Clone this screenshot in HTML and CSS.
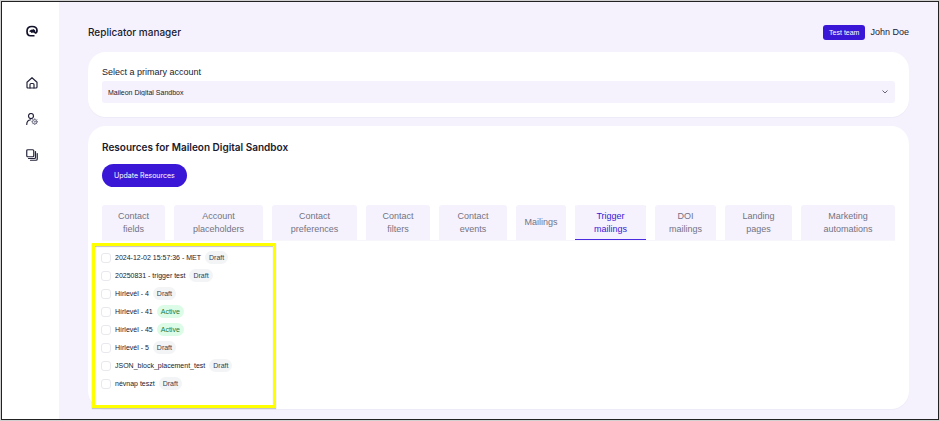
FILE: index.html
```html
<!DOCTYPE html>
<html lang="en">
  <head>
    <meta charset="UTF-8" />
    <meta name="viewport" content="width=device-width, initial-scale=1.0" />
    <title>Replicator manager</title>
    <link rel="stylesheet" href="styles.css" />
  </head>

  <body>
    <div class="app">
      <nav class="sidebar">
        <a href="#" class="logo" aria-label="Maileon">
          <svg viewBox="0 0 24 24" fill="none">
            <path
              d="M17 21.500H9C4.500 21.500 2 18 2 12.500C2 6 5.500 3 12 3C18.500 3 22 5.500 22 11C22 15 20.500 16 17.500 16"
              stroke="#12122b"
              stroke-width="3.4"
            />
            <path d="M6 12.500L10 9.500L14 9L15 8L18.500 11V16.500L14 15L11 16L9.500 14Z" fill="#12122b" />
          </svg>
        </a>
        <a href="#" aria-label="Home">
          <svg viewBox="0 0 24 24" class="line-icon">
            <path d="M2 10.500L12 1.500L22 10.500V20C22 21.500 21.500 22 20 22H4C2.500 22 2 21.500 2 20Z" />
            <path d="M8 22V15C8 13.500 8.500 13 10 13H14C15.500 13 16 13.500 16 15V22" />
          </svg>
        </a>
        <a href="#" aria-label="User settings">
          <svg viewBox="0 0 24 24" class="line-icon">
            <circle cx="10" cy="6" r="5" />
            <path d="M1.500 23C1.500 17.500 4.500 14 9.500 13.500" />
            <g class="gear">
              <circle cx="17.500" cy="17.500" r="4.500" />
              <circle cx="17.500" cy="17.500" r="1" />
              <path d="M17.500 11.500V13M17.500 22V23.500M11.500 17.500H13M22 17.500H23.500M13.300 13.300L14.300 14.300M20.700 20.700L21.700 21.700M21.700 13.300L20.700 14.300M14.300 20.700L13.300 21.700" />
            </g>
          </svg>
        </a>
        <a href="#" aria-label="Resources">
          <svg viewBox="0 0 24 24" class="line-icon">
            <rect x="1.500" y="1.500" width="14" height="14" rx="2" />
            <path d="M19 5V17C19 18.500 18.500 19 17 19H5" />
            <path d="M22.500 9V20C22.500 22 22 22.500 20 22.500H9" />
          </svg>
        </a>
      </nav>

      <main class="content">
        <header class="topbar">
          <h1>Replicator manager</h1>
          <div class="user">
            <button type="button" class="team">Test team</button>
            <span>John Doe</span>
          </div>
        </header>

        <section class="card account">
          <label for="account">Select a primary account</label>
          <div class="select">
            <select id="account">
              <option>Maileon Digital Sandbox</option>
            </select>
            <svg viewBox="0 0 6 4" class="chevron">
              <path d="M0.500 0.500L3 3L5.500 0.500" />
            </svg>
          </div>
        </section>

        <section class="card resources">
          <h2>Resources for Maileon Digital Sandbox</h2>
          <button type="button" class="update">Update Resources</button>

          <div class="tabs" role="tablist">
            <button type="button" role="tab">Contact<br />fields</button>
            <button type="button" role="tab">Account<br />placeholders</button>
            <button type="button" role="tab">Contact<br />preferences</button>
            <button type="button" role="tab">Contact<br />filters</button>
            <button type="button" role="tab">Contact<br />events</button>
            <button type="button" role="tab">Mailings</button>
            <button type="button" role="tab" class="active" aria-selected="true">Trigger<br />mailings</button>
            <button type="button" role="tab">DOI<br />mailings</button>
            <button type="button" role="tab">Landing<br />pages</button>
            <button type="button" role="tab">Marketing<br />automations</button>
          </div>

          <ul class="list">
            <li>
              <input type="checkbox" id="r1" />
              <label for="r1">2024-12-02 15:57:36 - MET</label>
              <span class="badge">Draft</span>
            </li>
            <li>
              <input type="checkbox" id="r2" />
              <label for="r2">20250831 - trigger test</label>
              <span class="badge">Draft</span>
            </li>
            <li>
              <input type="checkbox" id="r3" />
              <label for="r3">Hírlevél - 4</label>
              <span class="badge">Draft</span>
            </li>
            <li>
              <input type="checkbox" id="r4" />
              <label for="r4">Hírlevél - 41</label>
              <span class="badge green">Active</span>
            </li>
            <li>
              <input type="checkbox" id="r5" />
              <label for="r5">Hírlevél - 45</label>
              <span class="badge green">Active</span>
            </li>
            <li>
              <input type="checkbox" id="r6" />
              <label for="r6">Hírlevél - 5</label>
              <span class="badge">Draft</span>
            </li>
            <li>
              <input type="checkbox" id="r7" />
              <label for="r7">JSON_block_placement_test</label>
              <span class="badge">Draft</span>
            </li>
            <li>
              <input type="checkbox" id="r8" />
              <label for="r8">névnap teszt</label>
              <span class="badge">Draft</span>
            </li>
          </ul>
        </section>
      </main>
    </div>
  </body>
</html>
```

FILE: styles.css
```css
* {
  margin: 0;
  padding: 0;
  box-sizing: border-box;
}

body {
  min-height: 100vh;
  display: flex;
  padding: 1px;
  background-color: #d0d0d0;
  color: #1a1a2e;
  font-family: "Liberation Sans", Arial, sans-serif;
  font-size: 7px;
}

button,
select {
  font-family: inherit;
  border: none;
  cursor: pointer;
}

.app {
  flex: 1;
  display: flex;
  border: 1px solid #222;
  background-color: #f5f2fd;
}

/* sidebar */
.sidebar {
  width: 57px;
  padding: 23px 0 0 24px;
  display: flex;
  flex-direction: column;
  gap: 24px;
  background-color: white;
}

.sidebar a,
.sidebar svg {
  display: block;
  width: 12px;
  height: 12px;
}

.sidebar .logo {
  margin-bottom: 16px;
}

.line-icon {
  fill: none;
  stroke: #25253c;
  stroke-width: 2.4;
  stroke-linecap: round;
  stroke-linejoin: round;
}

.gear {
  stroke: #77778a;
  stroke-width: 2;
}

/* content */
.content {
  flex: 1;
  padding: 21px 29px 10px;
  display: flex;
  flex-direction: column;
}

.topbar {
  display: flex;
  justify-content: space-between;
  align-items: center;
  height: 18px;
  margin-bottom: 11px;
}

h1 {
  font-family: Inter, sans-serif;
  font-size: 10px;
  font-weight: 500;
}

.user {
  display: flex;
  align-items: center;
  gap: 5px;
  font-size: 9px;
}

.team {
  height: 15px;
  padding: 0 6px;
  border-radius: 3px;
  background-color: #3a17d6;
  color: white;
  font-size: 7px;
}

.card {
  padding: 14px;
  border-radius: 18px;
  background-color: white;
  box-shadow: 0 1px 1px rgba(40, 20, 90, 0.03);
}

.account {
  margin-bottom: 9px;
}

.account label {
  display: block;
  margin-bottom: 3px;
  font-size: 9px;
  line-height: 12px;
}

.select {
  position: relative;
}

.select select {
  display: block;
  width: 100%;
  height: 22px;
  padding: 0 6px;
  border-radius: 3px;
  appearance: none;
  background-color: #f5f2fd;
  color: #1a1a2e;
  font-size: 7px;
}

.chevron {
  position: absolute;
  right: 7px;
  top: 9px;
  width: 6px;
  height: 4px;
  fill: none;
  stroke: #666677;
  pointer-events: none;
}

.resources {
  flex: 1;
  padding-bottom: 1px;
}

h2 {
  margin-bottom: 9px;
  font-family: Inter, sans-serif;
  font-size: 10px;
  font-weight: 600;
  line-height: 15px;
}

.update {
  display: block;
  height: 23px;
  padding: 0 12px;
  margin-bottom: 18px;
  border-radius: 12px;
  background-color: #3a17d6;
  color: white;
  font-family: Inter, sans-serif;
  font-size: 7px;
}

/* tabs */
.tabs {
  display: grid;
  grid-template-columns: 63fr 89fr 85fr 64fr 68fr 50fr 71fr 61fr 67fr 94fr;
  gap: 9px;
  margin-bottom: 2px;
  border-bottom: 1px solid #f7f6fa;
}

.tabs button {
  height: 35px;
  border-radius: 3px 3px 0 0;
  background-color: #f5f2fd;
  color: #737384;
  font-size: 9px;
  line-height: 13px;
}

.tabs .active {
  border-radius: 3px 3px 0 0;
  box-shadow: inset 0 -1px #4a2be0;
  color: #3a17d6;
}

/* resource list */
.list {
  width: 184px;
  margin-left: -10px;
  padding: 5px 6px 15px;
  display: flex;
  flex-direction: column;
  gap: 5px;
  border: 3px solid #ffff00;
  box-shadow: inset 0 1px 1px #c4c4c4, 0 1px 1px #c4c4c4;
  list-style: none;
}

.list li {
  display: flex;
  align-items: center;
  height: 13px;
}

.list input {
  width: 10px;
  height: 10px;
  margin-right: 4px;
  border: 1px solid #e8e8ee;
  border-radius: 3px;
  appearance: none;
  background-color: white;
}

.list label {
  margin-right: 4px;
}

.badge {
  padding: 0 4px;
  border-radius: 7px;
  background-color: #f2f4f6;
  color: #374151;
  line-height: 13px;
}

.green {
  background-color: #dcfce7;
  color: #1b7a3c;
}
```
